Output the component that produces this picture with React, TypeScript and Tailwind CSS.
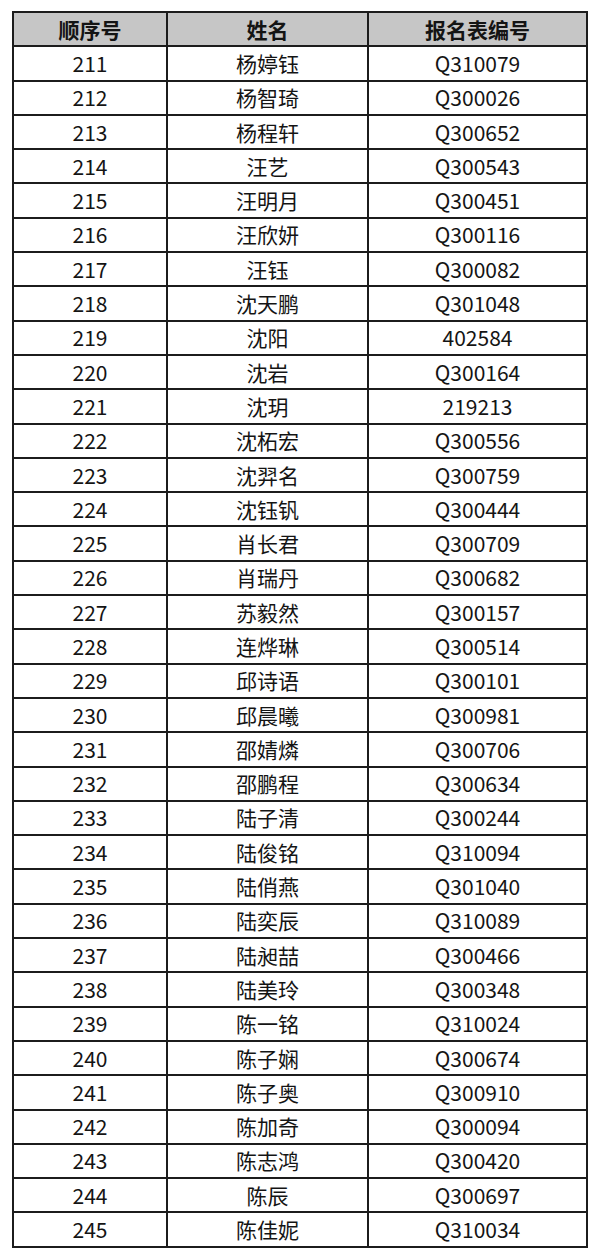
import React from "react";

const rows: [string, string, string][] = [
  ["211", "杨婷钰", "Q310079"],
  ["212", "杨智琦", "Q300026"],
  ["213", "杨程轩", "Q300652"],
  ["214", "汪艺", "Q300543"],
  ["215", "汪明月", "Q300451"],
  ["216", "汪欣妍", "Q300116"],
  ["217", "汪钰", "Q300082"],
  ["218", "沈天鹏", "Q301048"],
  ["219", "沈阳", "402584"],
  ["220", "沈岩", "Q300164"],
  ["221", "沈玥", "219213"],
  ["222", "沈柘宏", "Q300556"],
  ["223", "沈羿名", "Q300759"],
  ["224", "沈钰钒", "Q300444"],
  ["225", "肖长君", "Q300709"],
  ["226", "肖瑞丹", "Q300682"],
  ["227", "苏毅然", "Q300157"],
  ["228", "连烨琳", "Q300514"],
  ["229", "邱诗语", "Q300101"],
  ["230", "邱晨曦", "Q300981"],
  ["231", "邵婧燐", "Q300706"],
  ["232", "邵鹏程", "Q300634"],
  ["233", "陆子清", "Q300244"],
  ["234", "陆俊铭", "Q310094"],
  ["235", "陆俏燕", "Q301040"],
  ["236", "陆奕辰", "Q310089"],
  ["237", "陆昶喆", "Q300466"],
  ["238", "陆美玲", "Q300348"],
  ["239", "陈一铭", "Q310024"],
  ["240", "陈子娴", "Q300674"],
  ["241", "陈子奥", "Q300910"],
  ["242", "陈加奇", "Q300094"],
  ["243", "陈志鸿", "Q300420"],
  ["244", "陈辰", "Q300697"],
  ["245", "陈佳妮", "Q310034"],
];

export default function App() {
  return (
    <div
      className="w-[600px] h-[1259px] bg-white pt-[11px] pl-[12px]"
      style={{ fontFamily: '"Noto Sans CJK SC", "Noto Sans", sans-serif' }}
    >
      <table className="border-collapse w-[574px] table-fixed text-[21px] text-[#141414] leading-none">
        <colgroup>
          <col className="w-[154px]" />
          <col className="w-[201px]" />
          <col className="w-[219px]" />
        </colgroup>
        <thead>
          <tr className="bg-[#c6c6c6]">
            <th className="h-[34.3px] border-2 border-[#1c1c1c] font-bold text-center p-0">顺序号</th>
            <th className="h-[34.3px] border-2 border-[#1c1c1c] font-bold text-center p-0">姓名</th>
            <th className="h-[34.3px] border-2 border-[#1c1c1c] font-bold text-center p-0">报名表编号</th>
          </tr>
        </thead>
        <tbody>
          {rows.map((r) => (
            <tr key={r[0]}>
              <td className="h-[34.3px] border-2 border-[#1c1c1c] text-center p-0">{r[0]}</td>
              <td className="h-[34.3px] border-2 border-[#1c1c1c] text-center p-0">{r[1]}</td>
              <td className="h-[34.3px] border-2 border-[#1c1c1c] text-center p-0">{r[2]}</td>
            </tr>
          ))}
        </tbody>
      </table>
    </div>
  );
}
